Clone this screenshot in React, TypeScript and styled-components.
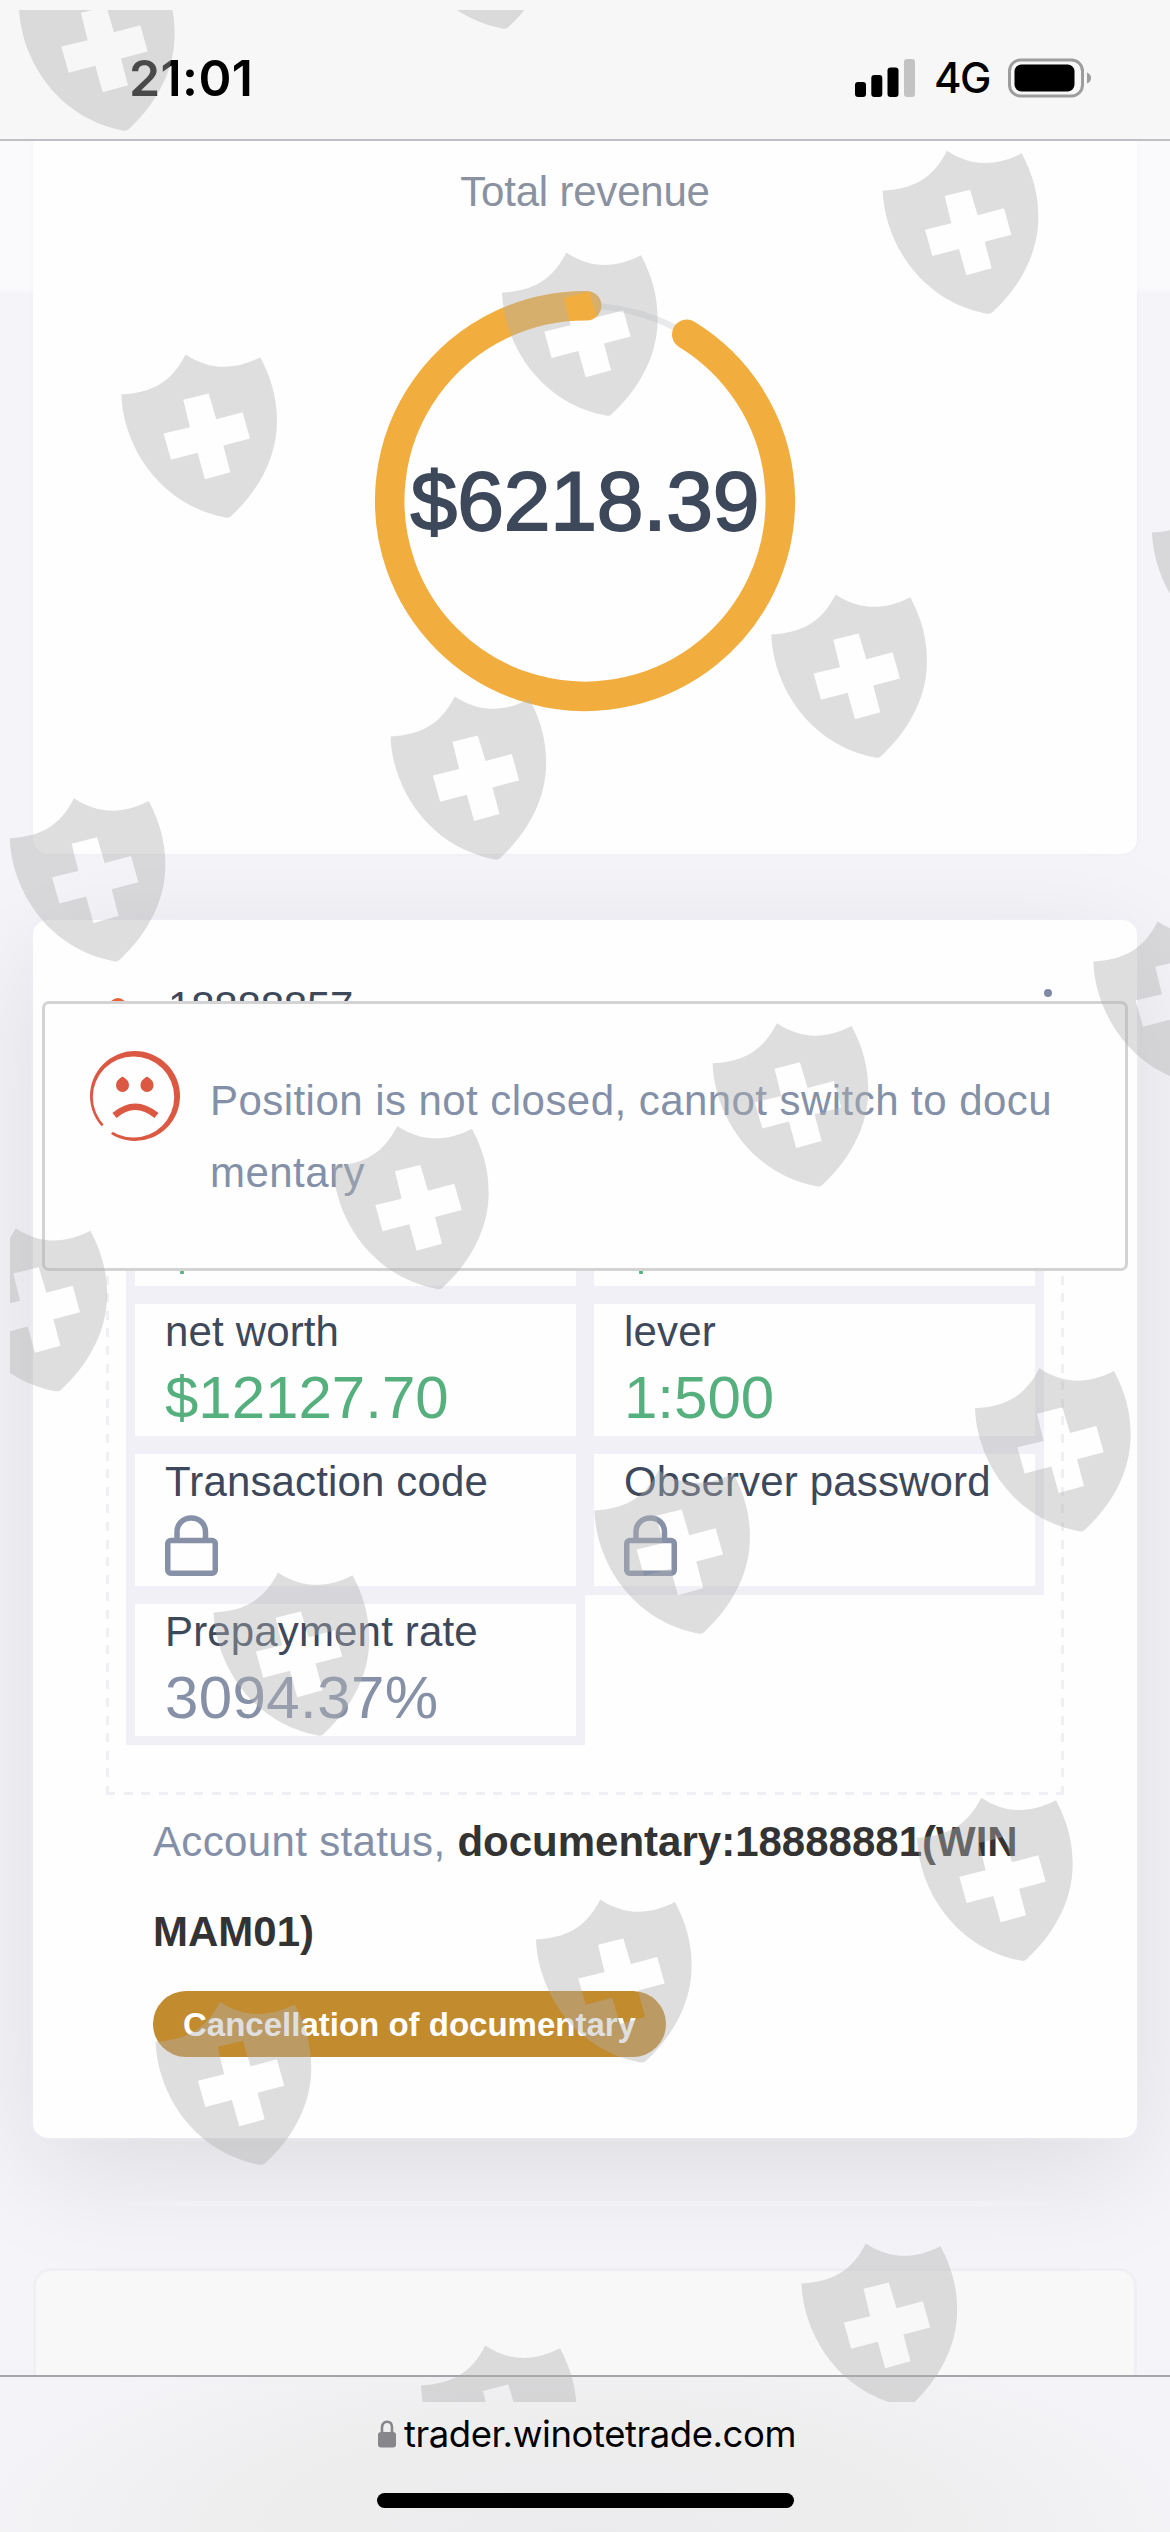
import React from "react";
import styled, { createGlobalStyle } from "styled-components";

const sans = `"Liberation Sans", Arial, sans-serif`;
const system = `Inter, "Liberation Sans", sans-serif`;

const GlobalStyle = createGlobalStyle`
  * { box-sizing: border-box; }
  body { margin: 0; background: #f4f4fa; }
  svg { display: block; flex: none; }
`;

const Screen = styled.div`
  position: relative;
  width: 1170px;
  height: 2532px;
  overflow: hidden;
  display: flex;
  flex-direction: column;
  font-family: ${sans};
`;

const StatusBar = styled.header`
  flex: none;
  height: 141px;
  padding: 16px 78px 0 129px;
  display: flex;
  align-items: center;
  justify-content: space-between;
  background: #f7f7f7;
  border-bottom: 2px solid #c0c0c4;
  font-family: ${system};
  color: #000;
`;

const Clock = styled.time`
  font-size: 50px;
  font-weight: 600;
  line-height: 60px;
  letter-spacing: 0.4px;
`;

const Indicators = styled.div`
  display: flex;
  align-items: center;
`;

const Network = styled.span`
  margin: 0 18px 0 19px;
  font-size: 42px;
  font-weight: 500;
  line-height: 50px;
  letter-spacing: -1.5px;
`;

const Page = styled.main`
  flex: none;
  height: 2234px;
  padding: 0 33px;
  overflow: hidden;
  background: linear-gradient(#fafafc 0 148px, #f4f4f9 154px);
`;

const RevenueCard = styled.section`
  height: 713px;
  padding-top: 26px;
  display: flex;
  flex-direction: column;
  align-items: center;
  background: #fefefe;
  border-radius: 0 0 15px 15px;
  box-shadow: 0 0 4px rgba(90, 90, 120, 0.05);
`;

const RevenueTitle = styled.h2`
  margin: 0 0 73px;
  font-size: 42px;
  font-weight: 400;
  line-height: 50px;
  letter-spacing: -0.2px;
  color: #8a91a0;
`;

const Gauge = styled.div`
  display: grid;
  place-items: center;
  > * { grid-area: 1 / 1; }
`;

const GaugeValue = styled.span`
  font-size: 84px;
  line-height: 96px;
  letter-spacing: -0.2px;
  color: #3d485a;
  -webkit-text-stroke: 1.8px #3d485a;
`;

const AccountCard = styled.section`
  position: relative;
  height: 1218px;
  margin-top: 66px;
  padding: 62px 73px 0;
  background: #fefefe;
  border-radius: 15px;
  box-shadow: 0 0 5px rgba(240, 240, 250, 0.9), 0 30px 120px rgba(5, 0, 10, 0.1);
`;

const AccountHeader = styled.div`
  height: 50px;
  padding: 0 12px 0 3px;
  display: flex;
  align-items: center;
`;

const StatusDot = styled.i`
  width: 18px;
  height: 18px;
  margin: 0 41px 0 0;
  border-radius: 50%;
  background: #ea6238;
`;

const AccountNumber = styled.span`
  flex: 1;
  font-size: 42px;
  line-height: 50px;
  letter-spacing: -0.2px;
  color: #3d485a;
`;

const MenuDots = styled.div`
  display: flex;
  flex-direction: column;
  gap: 6px;
  i {
    width: 8px;
    height: 8px;
    border-radius: 50%;
    background: #7f8ba6;
  }
`;

const dash = "#efeff4 0 9px, transparent 9px 17.6px";
const DetailsBox = styled.div`
  height: 735px;
  margin: 28px 0 0;
  padding: 85px 20px 0;
  background:
    repeating-linear-gradient(90deg, ${dash}) bottom / 100% 3px no-repeat,
    repeating-linear-gradient(0deg, ${dash}) left / 3px 100% no-repeat,
    repeating-linear-gradient(0deg, ${dash}) right / 3px 100% no-repeat;
`;

const Cells = styled.div`
  display: grid;
  grid-template-columns: 459px 459px;
  grid-auto-rows: 150px;
`;

const Cell = styled.div`
  border: 9px solid #f0f0f6;
  padding: 3px 0 0 30px;
  color: #8691a8;
`;

const Label = styled.div`
  height: 50px;
  font-size: 42px;
  line-height: 50px;
  letter-spacing: 0.15px;
  white-space: nowrap;
  color: #3d485a;
`;

const Value = styled.div<{ $positive?: boolean; $drop?: number }>`
  margin-top: ${(p) => 5 + (p.$drop ?? 0)}px;
  font-size: 60px;
  line-height: 72px;
  letter-spacing: ${(p) => (p.$positive ? 0 : 0.4)}px;
  color: ${(p) => (p.$positive ? "#55b07e" : "#8691a8")};
`;

const LockWrap = styled.div`
  margin-top: 8px;
`;

const AccountStatus = styled.p`
  margin: 2px 0 14px 47px;
  font-size: 42px;
  line-height: 90px;
  letter-spacing: 0.35px;
  color: #8490a8;
  white-space: nowrap;
  b {
    letter-spacing: 0;
    color: #333;
  }
`;

const CancelButton = styled.button`
  display: block;
  width: 513px;
  height: 66px;
  margin-left: 47px;
  padding: 0;
  border: 0;
  border-radius: 33px;
  background: #c28b2d;
  color: #fff;
  font: 700 33px/67px ${sans};
`;

const Divider = styled.hr`
  position: relative;
  height: 5px;
  margin: 63px 80px 0;
  border: 0;
  background: linear-gradient(90deg, transparent, #f2f1f6 8% 92%, transparent);
`;

const NextCard = styled.section`
  position: relative;
  height: 140px;
  margin-top: 62px;
  border: 3px solid #f0f0f4;
  border-radius: 18px;
  background: #f8f8f8;
`;

const BrowserBar = styled.footer`
  position: relative;
  flex: 1;
  padding-top: 31px;
  display: flex;
  flex-direction: column;
  align-items: center;
  border-top: 2px solid #a4a4aa;
  background: radial-gradient(ellipse 640px 220px at 50% 100%, #ebebed, #eeeeef 55%, #f4f4f8);
`;

const Address = styled.div`
  height: 52px;
  padding-left: 4px;
  display: flex;
  align-items: center;
  gap: 8px;
  font-family: ${system};
  font-size: 36.500px;
  line-height: 52px;
  letter-spacing: -0.45px;
  color: #000;
`;

const HomeIndicator = styled.div`
  width: 417px;
  height: 15px;
  margin-top: 33px;
  border-radius: 8px;
  background: #000;
`;

const Toast = styled.div`
  position: absolute;
  left: 42px;
  top: 1001px;
  width: 1086px;
  height: 270px;
  padding: 47px 45px;
  display: flex;
  gap: 30px;
  background: #fefefe;
  border: 3px solid #d2d3d2;
  border-radius: 7px;
`;

const ToastText = styled.p`
  margin: 14px 0 0;
  font-size: 42px;
  line-height: 72px;
  letter-spacing: 0.45px;
  white-space: nowrap;
  color: #8490a8;
`;

const Watermark = styled.svg`
  position: absolute;
  left: 10px;
  top: 10px;
  pointer-events: none;
`;

const SHIELDS = [
  [19, -32.5], [398.6, -134.5],
  [882.7, 150.7], [502, 252.6], [121.3, 354.5],
  [1152, 492.6], [771.3, 594.5], [390.5, 696.4], [9.7, 798.3],
  [1093.3, 921.5], [712.6, 1023.3], [333, 1126], [-48.6, 1228.2],
  [975, 1368.3], [594.3, 1470.5], [213.6, 1572.5],
  [917, 1797.7], [536, 1899.4], [155.6, 2001.7],
  [801.5, 2243.5], [421, 2345.6],
];

function Shields() {
  return (
    <Watermark width="1160" height="2392" viewBox="10 10 1160 2392">
      <defs>
        <path
          id="shield"
          fillRule="evenodd"
          d="M0 120C90 115 150 85 193 0C265 48 340 48 417 8C450 70 467 130 467 200C467 320 400 420 329 485Q322 491 312 489C110 450 5 270 0 120ZM186 136L262 117L285 194L364 173L386 252L306 273L327 353L251 374L229 295L149 316L127 237L206 218Z"
        />
      </defs>
      {SHIELDS.map(([x, y]) => (
        <use
          key={`${x},${y}`}
          href="#shield"
          fill="rgba(177,177,177,.41)"
          transform={`translate(${x} ${y}) scale(.3333)`}
        />
      ))}
    </Watermark>
  );
}

const Signal = () => (
  <svg width="60" height="38" viewBox="0 0 60 38">
    <rect x="0" y="23" width="11" height="15" rx="3" />
    <rect x="16.3" y="16" width="11" height="22" rx="3" />
    <rect x="32.5" y="8.5" width="11" height="29.5" rx="3" />
    <rect x="49" y="0" width="11" height="38" rx="3" fill="#c3c3c3" />
  </svg>
);

const Battery = () => (
  <svg width="84" height="40" viewBox="0 0 84 40">
    <rect x="1.5" y="2" width="73" height="36" rx="11" fill="none" stroke="#9d9d9d" strokeWidth="3" />
    <rect x="6.5" y="6.5" width="60" height="27" rx="7" />
    <path d="M79 14.500Q83 16 83 20T79 25.500Z" fill="#9d9d9d" />
  </svg>
);

const Ring = () => (
  <svg width="422" height="422" viewBox="-1 -1 422 422" fill="none">
    <circle cx="210" cy="210" r="195.300" stroke="#e9eaec" strokeWidth="6" />
    <path
      d="M311.750 43.300A195.300 195.300 0 1 1 211.700 14.710"
      stroke="#f1ad3d"
      strokeWidth="29.500"
      strokeLinecap="round"
    />
  </svg>
);

const Lock = () => (
  <LockWrap>
    <svg width="53" height="61" viewBox="0 0 53 61" fill="none" stroke="#8691a8" strokeWidth="5.500">
      <rect x="2.750" y="25.600" width="47.500" height="32.600" rx="3" />
      <path d="M12 25V17C12 9 18 2.900 26.300 2.900S40.500 9 40.500 17V25" />
    </svg>
  </LockWrap>
);

const SadFace = () => (
  <svg width="90" height="90" viewBox="0 0 90 90" fill="#db5843">
    <path
      fillRule="evenodd"
      d="M0 45A45 45 0 1 1 90 45A45 45 0 1 1 0 45ZM2.800 46A40.700 40.500 0 1 0 84.200 46A40.700 40.500 0 1 0 2.800 46Z"
    />
    <path d="M9 87L22 73" stroke="#fefefe" strokeWidth="12" />
    <path d="M24.500 64.500Q45 47 66.500 64.500" fill="none" stroke="#db5843" strokeWidth="6.500" />
    <path d="M32.500 25.500Q39 29 39 34.500A6.500 6.500 0 0 1 26 34.500Q26 29 32.500 25.500ZM57 25.500Q63.500 29 63.500 34.500A6.500 6.500 0 0 1 50.500 34.500Q50.500 29 57 25.500Z" />
  </svg>
);

const AddressLock = () => (
  <svg width="18" height="28" viewBox="0 0 18 28">
    <rect y="12" width="18" height="15.500" rx="3" fill="#86868b" />
    <path d="M4 13V7.500C4 4 6 1.800 9 1.800S14 4 14 7.500V13" fill="none" stroke="#86868b" strokeWidth="2.600" />
  </svg>
);

export default function App() {
  return (
    <>
      <GlobalStyle />
      <Screen>
        <StatusBar>
          <Clock>21:01</Clock>
          <Indicators>
            <Signal />
            <Network>4G</Network>
            <Battery />
          </Indicators>
        </StatusBar>
        <Page>
          <RevenueCard>
            <RevenueTitle>Total revenue</RevenueTitle>
            <Gauge>
              <Ring />
              <GaugeValue>$6218.39</GaugeValue>
            </Gauge>
          </RevenueCard>
          <AccountCard>
            <AccountHeader>
              <StatusDot />
              <AccountNumber>18888857</AccountNumber>
              <MenuDots><i /><i /><i /></MenuDots>
            </AccountHeader>
            <DetailsBox>
              <Cells>
                <Cell><Label /><Value $positive $drop={2}>$</Value></Cell>
                <Cell><Label /><Value $positive $drop={2}>$</Value></Cell>
                <Cell><Label>net worth</Label><Value $positive>$12127.70</Value></Cell>
                <Cell><Label>lever</Label><Value $positive>1:500</Value></Cell>
                <Cell><Label>Transaction code</Label><Lock /></Cell>
                <Cell><Label>Observer password</Label><Lock /></Cell>
                <Cell><Label>Prepayment rate</Label><Value>3094.37%</Value></Cell>
              </Cells>
            </DetailsBox>
            <AccountStatus>
              Account status, <b>documentary:18888881(WIN<br />MAM01)</b>
            </AccountStatus>
            <CancelButton>Cancellation of documentary</CancelButton>
          </AccountCard>
          <Divider />
          <NextCard />
        </Page>
        <BrowserBar>
          <Address><AddressLock />trader.winotetrade.com</Address>
          <HomeIndicator />
        </BrowserBar>
        <Toast>
          <SadFace />
          <ToastText>
            Position is not closed, cannot switch to docu<br />mentary
          </ToastText>
        </Toast>
        <Shields />
      </Screen>
    </>
  );
}
